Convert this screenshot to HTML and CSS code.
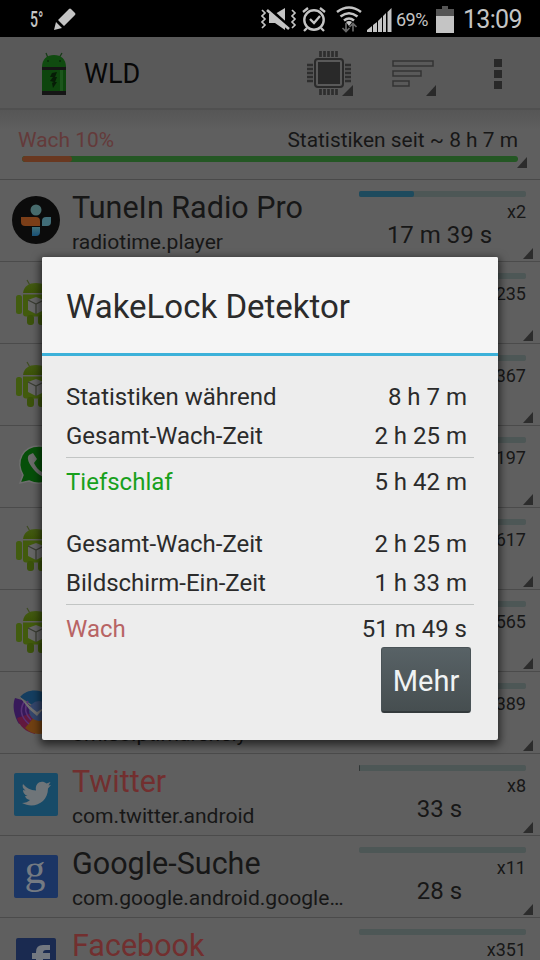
FILE: index.html
```html
<!DOCTYPE html>
<html lang="de">
<head>
<meta charset="UTF-8">
<meta name="viewport" content="width=device-width, initial-scale=1.0">
<title>WakeLock Detektor</title>
<link rel="stylesheet" href="styles.css">
</head>
<body>

<svg class="defs" width="0" height="0">
  <defs>
    <linearGradient id="droidGreen" x1="0" y1="0" x2="0" y2="1">
      <stop offset="0" stop-color="#435a13"/>
      <stop offset="1" stop-color="#3c5308"/>
    </linearGradient>
    <linearGradient id="tuneBlue" x1="0" y1="0" x2="0" y2="1">
      <stop offset="0" stop-color="#3f6f78"/>
      <stop offset="1" stop-color="#184f75"/>
    </linearGradient>
  </defs>
  <symbol id="droid" viewBox="0 0 48 48">
    <path d="M15 2l4 7M33 2l-4 7" stroke="#3f4c22" stroke-width="1.2"/>
    <path d="M11 15c1-7 6-10 13-10s12 3 13 10z" fill="url(#droidGreen)"/>
    <rect x="4" y="17" width="6" height="19" rx="2.5" fill="#425c10"/>
    <rect x="38" y="17" width="6" height="19" rx="2.5" fill="#425c10"/>
    <path d="M11 16.500h26v19q0 3-3 3h-20q-3 0-3-3z" fill="#425b0d"/>
    <rect x="15" y="37" width="7" height="10" rx="3" fill="#3b520b"/>
    <rect x="26" y="37" width="7" height="10" rx="3" fill="#3b520b"/>
    <path d="M16 22l8-3 8 3v10l-8 4-8-4z" fill="#666"/>
    <path d="M16 22l8 4 8-4M24 26v10" stroke="#3a3d33" stroke-width="1.200" fill="none"/>
  </symbol>
</svg>

<div class="statusbar">
  <span class="temp">5°</span>
  <svg class="pencil" width="24" height="24" viewBox="0 0 24 24"><path d="M0 23l2-8 6 6zM4 13L15 2q1-1 2 0l4 4q1 1 0 2L10 19z" fill="#c4c4c4"/></svg>
  <svg class="system" width="132" height="28" viewBox="0 0 132 28" fill="none" stroke="#c4c4c4">
    <!-- vibrate / mute -->
    <path d="M1 5l3 3-3 3 3 3-3 3 3 3-3 3M31 5l3 3-3 3 3 3-3 3 3 3-3 3" stroke-width="1.700"/>
    <path d="M8 9h6l10-6v22l-10-7H8z" fill="#c4c4c4" stroke="none"/>
    <path d="M7 3l21 19" stroke="#000" stroke-width="4"/>
    <path d="M6 5l22 19" stroke-width="2.600"/>
    <!-- alarm -->
    <circle cx="53" cy="15" r="9.700" stroke-width="2.400"/>
    <path d="M49 14l4 4 6-7M42 7l5-4M64 7l-5-4M46 23l-3 3M60 23l3 3" stroke-width="2.300"/>
    <!-- wifi -->
    <path d="M76 7q12-9 24 0M79.500 11.500q8.500-6.500 17 0M83 15.500q5-4 10 0" stroke-width="2.600"/>
    <path d="M85 17q3-2 6 0l-3 4z" fill="#c4c4c4" stroke="none"/>
    <path d="M85 18v8M81.500 23l3.500 3.500 3.500-3.500M92 26.500v-8M88.500 22l3.500-3.500 3.500 3.500" stroke="#686868" stroke-width="1.700"/>
    <!-- signal -->
    <path d="M106 27v-2l5-4v6zM112 27v-7l4-3v10zM117 27V16l4-4v15zM122 27V11l3-3v19zM126.500 27V7l4-4v24z" fill="#c4c4c4" stroke="none"/>
  </svg>
  <span class="percent">69%</span>
  <svg class="battery" width="18" height="27" viewBox="0 0 18 27"><path d="M6 0h6v3h6v24H0V3h6z" fill="#555"/><path d="M0 10h18v17H0z" fill="#c4c4c4"/></svg>
  <span class="clock">13:09</span>
</div>

<div class="actionbar">
  <svg class="logo" width="26" height="44" viewBox="0 0 26 44">
    <path d="M7 6L5 1M18 6l3-5" stroke="#173c17" stroke-width="1.300"/>
    <path d="M1 15C1 7 6 3 13 3s12 4 12 12z" fill="#104b10"/>
    <path d="M1 15h24v28H1z" fill="#0d450d"/>
    <path d="M19 18h3v21h-3z" fill="#1c561c"/>
    <path d="M1 15h24v3H1zM1 39h24v4H1z" fill="#151515"/>
    <circle cx="7" cy="9" r="1" fill="#082808"/><circle cx="19" cy="9" r="1" fill="#082808"/>
    <path d="M11 21l5-1-2 5h2l-2 5h2l-4 6-1-5 2-1-4-1 3-4H9z" fill="#061c06"/>
  </svg>
  <span class="app-name">WLD</span>
  <svg class="chip" width="48" height="46" viewBox="0 0 48 46">
    <path d="M14.500 0v6M18.500 0v6M22.500 0v6M26.500 0v6M30.500 0v6M14.500 38v6M18.500 38v6M22.500 38v6M26.500 38v6M30.500 38v6M1 14h6M1 18h6M1 22h6M1 26h6M1 30h6M39 14h6M39 18h6M39 22h6M39 26h6M39 30h6" stroke="#2e2e2e" stroke-width="2.700"/>
    <rect x="9" y="8" width="28" height="28" rx="3" fill="none" stroke="#2a2a2a" stroke-width="2"/>
    <rect x="12" y="11" width="22" height="22" fill="#292929"/>
    <path d="M36 45l11-11v11z" fill="#2a2a2a"/>
  </svg>
  <svg class="sort" width="46" height="38" viewBox="0 0 46 38" fill="none" stroke="#343434" stroke-width="1.500">
    <path d="M1 2h40v5H1zM1 12h28v5H1zM1 22h16v5H1z"/>
    <path d="M34 37l10-11v11z" fill="#2a2a2a" stroke="none"/>
  </svg>
  <div class="overflow"><i></i><i></i><i></i></div>
</div>

<div class="summary">
  <div class="summary-text">
    <span class="awake">Wach 10%</span>
    <span class="since">Statistiken seit ~ 8 h 7 m</span>
  </div>
  <div class="total"><div class="total-awake" style="width: 10%"></div></div>
  <div class="corner"></div>
</div>

<div class="list">
  <div class="item">
    <svg class="icon" width="48" height="48" viewBox="0 0 48 48">
      <circle cx="24" cy="24" r="24" fill="#0b0b0b"/>
      <circle cx="24" cy="14" r="5.500" fill="#476b6c"/>
      <path d="M9 21h15q4 0 4 4v5H13q-4 0-4-4z" fill="#7b3e18"/>
      <path d="M39 21v5q0 4-4 4h-5v-5q0-4 4-4z" fill="#416d78"/>
      <path d="M20 31h8v5q0 4-4 4h-4z" fill="url(#tuneBlue)"/>
    </svg>
    <div class="names"><div class="name">TuneIn Radio Pro</div><div class="package">radiotime.player</div></div>
    <div class="usage"><div class="bar"><div class="fill" style="width: 33%"></div></div><div class="count">x2</div><div class="time">17 m 39 s</div></div>
    <div class="corner"></div>
  </div>
  <div class="item">
    <svg class="icon" width="48" height="48"><use href="#droid"/></svg>
    <div class="names"></div>
    <div class="usage"><div class="bar"></div><div class="count">235</div></div>
    <div class="corner"></div>
  </div>
  <div class="item">
    <svg class="icon" width="48" height="48"><use href="#droid"/></svg>
    <div class="names"></div>
    <div class="usage"><div class="bar"></div><div class="count">367</div></div>
    <div class="corner"></div>
  </div>
  <div class="item">
    <svg class="icon" width="48" height="48" viewBox="0 0 48 48">
      <path d="M8 41l3-8C3 19 11 4 27 4c12 0 20 8 20 19 0 15-17 22-30 16z" fill="#064f09" stroke="#6e6e6e" stroke-width="1.500"/>
      <path d="M17 13c-4 4 3 13 8 18 6 5 14 7 16 1l-7-5-4 3c-4-2-6-5-8-9l3-4-4-6z" fill="#6b6b6b"/>
    </svg>
    <div class="names"></div>
    <div class="usage"><div class="bar"></div><div class="count">197</div></div>
    <div class="corner"></div>
  </div>
  <div class="item">
    <svg class="icon" width="48" height="48"><use href="#droid"/></svg>
    <div class="names"></div>
    <div class="usage"><div class="bar"></div><div class="count">617</div></div>
    <div class="corner"></div>
  </div>
  <div class="item">
    <svg class="icon" width="48" height="48"><use href="#droid"/></svg>
    <div class="names"></div>
    <div class="usage"><div class="bar"></div><div class="count">565</div></div>
    <div class="corner"></div>
  </div>
  <div class="item">
    <svg class="icon" width="48" height="48" viewBox="0 0 48 48">
      <path d="M8 9C15 1 26 1 36 6L28 22z" fill="#143e60"/>
      <path d="M3 10C0 18 2 28 7 36L28 24 10 12z" fill="#37195a"/>
      <path d="M5 30c2 8 9 14 18 16l6-24z" fill="#62183e"/>
      <path d="M13 40c7 7 17 8 26 2L28 22z" fill="#704012"/>
      <path d="M12 14Q5 26 17 36M16 13Q10 23 19 32" stroke="#583276" stroke-width="1.500" fill="none"/>
      <circle cx="27" cy="23" r="10" fill="#34466c"/>
      <path d="M7 8l14 13 4 3 8-5-8 9-8-7z" fill="#707070"/>
    </svg>
    <div class="names"><div class="name"></div><div class="package">om.so.ptimarenely</div></div>
    <div class="usage"><div class="bar"></div><div class="count">389</div></div>
    <div class="corner"></div>
  </div>
  <div class="item">
    <svg class="icon" width="48" height="48" viewBox="0 0 48 48">
      <rect x="2" y="3" width="44" height="43" rx="2" fill="#174b68"/>
      <path d="M11 14q5 6 13 6.500c-1.500-8 6-11 10.500-7l4-1.500-2 3.500 2.500-.5-3 3.500c0 14-14 21-26 14.500q5 0 8-3-4-.5-5-4h2.500q-4.500-2-4.500-6l2.500.5q-4-3-2.500-6.500z" fill="#6f7579"/>
    </svg>
    <div class="names"><div class="name red">Twitter</div><div class="package">com.twitter.android</div></div>
    <div class="usage"><div class="bar"><div class="fill dark" style="width: 1px"></div></div><div class="count">x8</div><div class="time">33 s</div></div>
    <div class="corner"></div>
  </div>
  <div class="item">
    <svg class="icon" width="48" height="48" viewBox="0 0 48 48">
      <rect x="2" y="3" width="44" height="43" rx="2" fill="#1b3565"/>
      <text x="23" y="31" text-anchor="middle" class="google-g">g</text>
    </svg>
    <div class="names"><div class="name">Google-Suche</div><div class="package">com.google.android.google…</div></div>
    <div class="usage"><div class="bar"></div><div class="count">x11</div><div class="time">28 s</div></div>
    <div class="corner"></div>
  </div>
  <div class="item">
    <svg class="icon" width="48" height="48" viewBox="0 0 48 48">
      <rect x="4" y="4" width="40" height="40" rx="2" fill="#1a2a50"/>
      <path d="M24 44V25h-4v-6h4v-1q0-7 7-7h7v5h-4q-3 0-3 3h7v6h-7v19z" fill="#737880"/>
    </svg>
    <div class="names"><div class="name red">Facebook</div></div>
    <div class="usage"><div class="bar"></div><div class="count">x351</div></div>
  </div>
</div>

<div class="dialog">
  <div class="dialog-title">WakeLock Detektor</div>
  <div class="dialog-body">
    <div class="line"><span>Statistiken während</span><span>8 h 7 m</span></div>
    <div class="line"><span>Gesamt-Wach-Zeit</span><span>2 h 25 m</span></div>
    <div class="line result sleep"><span>Tiefschlaf</span><span>5 h 42 m</span></div>
    <div class="line"><span>Gesamt-Wach-Zeit</span><span>2 h 25 m</span></div>
    <div class="line"><span>Bildschirm-Ein-Zeit</span><span>1 h 33 m</span></div>
    <div class="line result wake"><span>Wach</span><span>51 m 49 s</span></div>
    <button class="more">Mehr</button>
  </div>
</div>

</body>
</html>
```
FILE: styles.css
```css
* {
  box-sizing: border-box;
}

body {
  margin: 0;
  height: 960px;
  overflow: hidden;
  position: relative;
  background-color: #5f5f5f;
  font-family: Roboto, sans-serif;
  color: #171717;
}

.defs {
  position: absolute;
}

svg {
  display: block;
  flex: none;
}

.statusbar {
  height: 37px;
  background-color: #000;
  color: #c4c4c4;
  display: flex;
  align-items: center;
  padding: 1px 0 0 30px;
}

.temp {
  width: 24px;
  font-size: 22px;
  font-weight: 500;
  transform: scaleX(0.64);
  transform-origin: left;
}

.system {
  margin-left: 183px;
}

.percent {
  margin-left: 3px;
  width: 40px;
  font-size: 18px;
  letter-spacing: -0.5px;
}

.clock {
  margin-left: 9px;
  font-size: 25px;
  letter-spacing: -0.7px;
  white-space: nowrap;
}

.actionbar {
  height: 73px;
  background-color: #595959;
  border-bottom: 2px solid #505050;
  display: flex;
  align-items: center;
  padding: 2px 0 0 41px;
}

.app-name {
  margin-left: 17px;
  width: 222px;
  font-size: 27px;
  color: #070707;
}

.sort {
  margin: 8px 0 0 38px;
}

.overflow {
  display: flex;
  flex-direction: column;
  gap: 3px;
  margin-left: 56px;
}

.overflow i {
  width: 8px;
  height: 8px;
  background-color: #292929;
}

.summary {
  height: 70px;
  padding: 16px 22px 0 18px;
  border-bottom: 1px solid #494949;
  background: linear-gradient(#565656, #5f5f5f 20px);
  position: relative;
}

.summary-text {
  display: flex;
  justify-content: space-between;
  font-size: 20.9px;
  line-height: 28px;
}

.awake {
  color: #643a3a;
}

.total {
  height: 6px;
  margin: 2px 0 0 4px;
  border-radius: 3px;
  background-color: #245724;
  overflow: hidden;
}

.total-awake {
  height: 6px;
  background-color: #693820;
  border-radius: 3px;
}

.corner {
  position: absolute;
  right: 7px;
  bottom: 2px;
  width: 10px;
  height: 11px;
  background-color: #2c2c2c;
  clip-path: polygon(100% 0, 100% 100%, 0 100%);
}

.summary .corner {
  right: 13px;
  bottom: 11px;
}

.item {
  height: 82px;
  position: relative;
  display: flex;
  padding: 0 14px 0 12px;
  border-bottom: 1px solid #4b4b4b;
}

.icon {
  margin-top: 16px;
}

.names {
  margin-left: 12px;
  width: 287px;
  padding-top: 9px;
  white-space: nowrap;
}

.name {
  height: 38px;
  line-height: 38px;
  font-size: 30.5px;
}

.package {
  line-height: 29px;
  font-size: 21.1px;
}

.red {
  color: #722f2f;
}

.usage {
  width: 167px;
  padding-top: 11px;
}

.bar {
  height: 6px;
  border-radius: 2px;
  background-color: #4d5756;
}

.fill {
  height: 6px;
  border-radius: 2px;
  background-color: #1e4b5e;
}

.dark {
  background-color: #303636;
}

.count {
  margin-top: 3px;
  font-size: 18px;
  line-height: 23px;
  text-align: right;
}

.time {
  font-size: 24px;
  line-height: 25px;
  text-align: center;
  padding-right: 6px;
}

.google-g {
  font-family: "Liberation Serif", serif;
  font-size: 42px;
  fill: #747a82;
}

.dialog {
  position: absolute;
  left: 42px;
  top: 257px;
  width: 456px;
  height: 483px;
  background-color: #ededed;
  border-radius: 2px;
  box-shadow: 0 3px 9px 2px rgba(0, 0, 0, 0.6);
  color: #2b2b2b;
}

.dialog-title {
  height: 99px;
  padding-left: 24px;
  line-height: 100px;
  font-size: 33px;
  background-color: #f5f5f5;
  border-bottom: 3px solid #3cb1d9;
  border-radius: 2px 2px 0 0;
}

.dialog-body {
  padding: 22px 24px 0;
  display: flex;
  flex-direction: column;
}

.line {
  height: 39px;
  line-height: 39px;
  font-size: 24px;
  display: flex;
  justify-content: space-between;
  padding-right: 7px;
}

.result {
  height: 68px;
  margin-top: 1px;
  padding-top: 5px;
  border-top: 1px solid #c2c5c4;
}

.sleep span:first-child {
  color: #18a01c;
}

.wake {
  height: 43px;
}

.wake span:first-child {
  color: #b86464;
}

.more {
  align-self: flex-end;
  margin-right: 3px;
  width: 90px;
  height: 66px;
  padding: 2px 0 0;
  border: 1px solid #4a5357;
  border-bottom: 2px solid #343a3c;
  border-radius: 3px;
  background: linear-gradient(#586266, #464e50);
  color: #f0f3f4;
  font-family: Roboto, sans-serif;
  font-size: 29px;
}
```
